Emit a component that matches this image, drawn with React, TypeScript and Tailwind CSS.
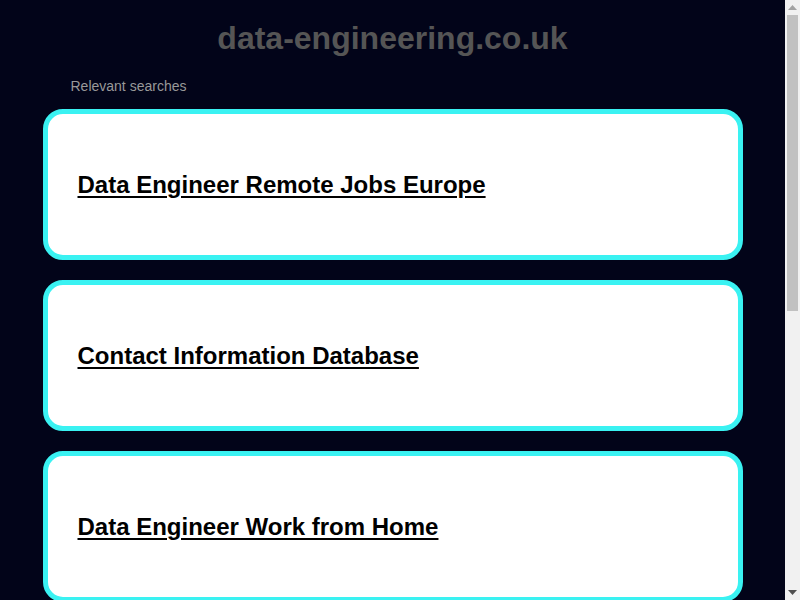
import React from "react";

const items = [
  "Data Engineer Remote Jobs Europe",
  "Contact Information Database",
  "Data Engineer Work from Home",
  "Data Engineering Courses Online",
  "Big Data Analytics Tools",
];

export default function App() {
  return (
    <div
      className="flex h-screen w-full overflow-hidden bg-[#020419]"
      style={{ fontFamily: '"Liberation Sans", Arial, sans-serif' }}
    >
      <main className="min-w-0 flex-1 overflow-hidden">
        <h1 className="pt-[20px] text-center text-[32px] font-bold leading-[37px] text-[#555555]">
          data-engineering.co.uk
        </h1>
        <div className="mx-auto mt-[20px] w-[700px]">
          <div className="pl-[28px] text-[14px] leading-[18px] text-[#999999]">
            Relevant searches
          </div>
          <div className="mt-[14px] flex flex-col gap-[20px]">
            {items.map((t) => (
              <a
                key={t}
                href="#"
                className="flex h-[151px] shrink-0 items-center rounded-[20px] border-[5px] border-[#3af2f2] bg-white px-[30px]"
              >
                <span className="text-[24px] font-bold leading-[28px] text-black underline decoration-[2px] underline-offset-[3px]">
                  {t}
                </span>
              </a>
            ))}
          </div>
        </div>
      </main>
      <aside className="flex h-full w-[15px] shrink-0 flex-col items-center bg-[#f1f1f1]">
        <div className="flex h-[15px] w-full items-center justify-center">
          <svg width="9" height="5" viewBox="0 0 9 5">
            <polygon points="0,5 9,5 4.5,0" fill="#a3a3a3" />
          </svg>
        </div>
        <div className="h-[296px] w-[11px] bg-[#c1c1c1]" />
        <div className="flex-1" />
        <div className="flex h-[15px] w-full items-center justify-center">
          <svg width="9" height="5" viewBox="0 0 9 5">
            <polygon points="0,0 9,0 4.5,5" fill="#505050" />
          </svg>
        </div>
      </aside>
    </div>
  );
}
